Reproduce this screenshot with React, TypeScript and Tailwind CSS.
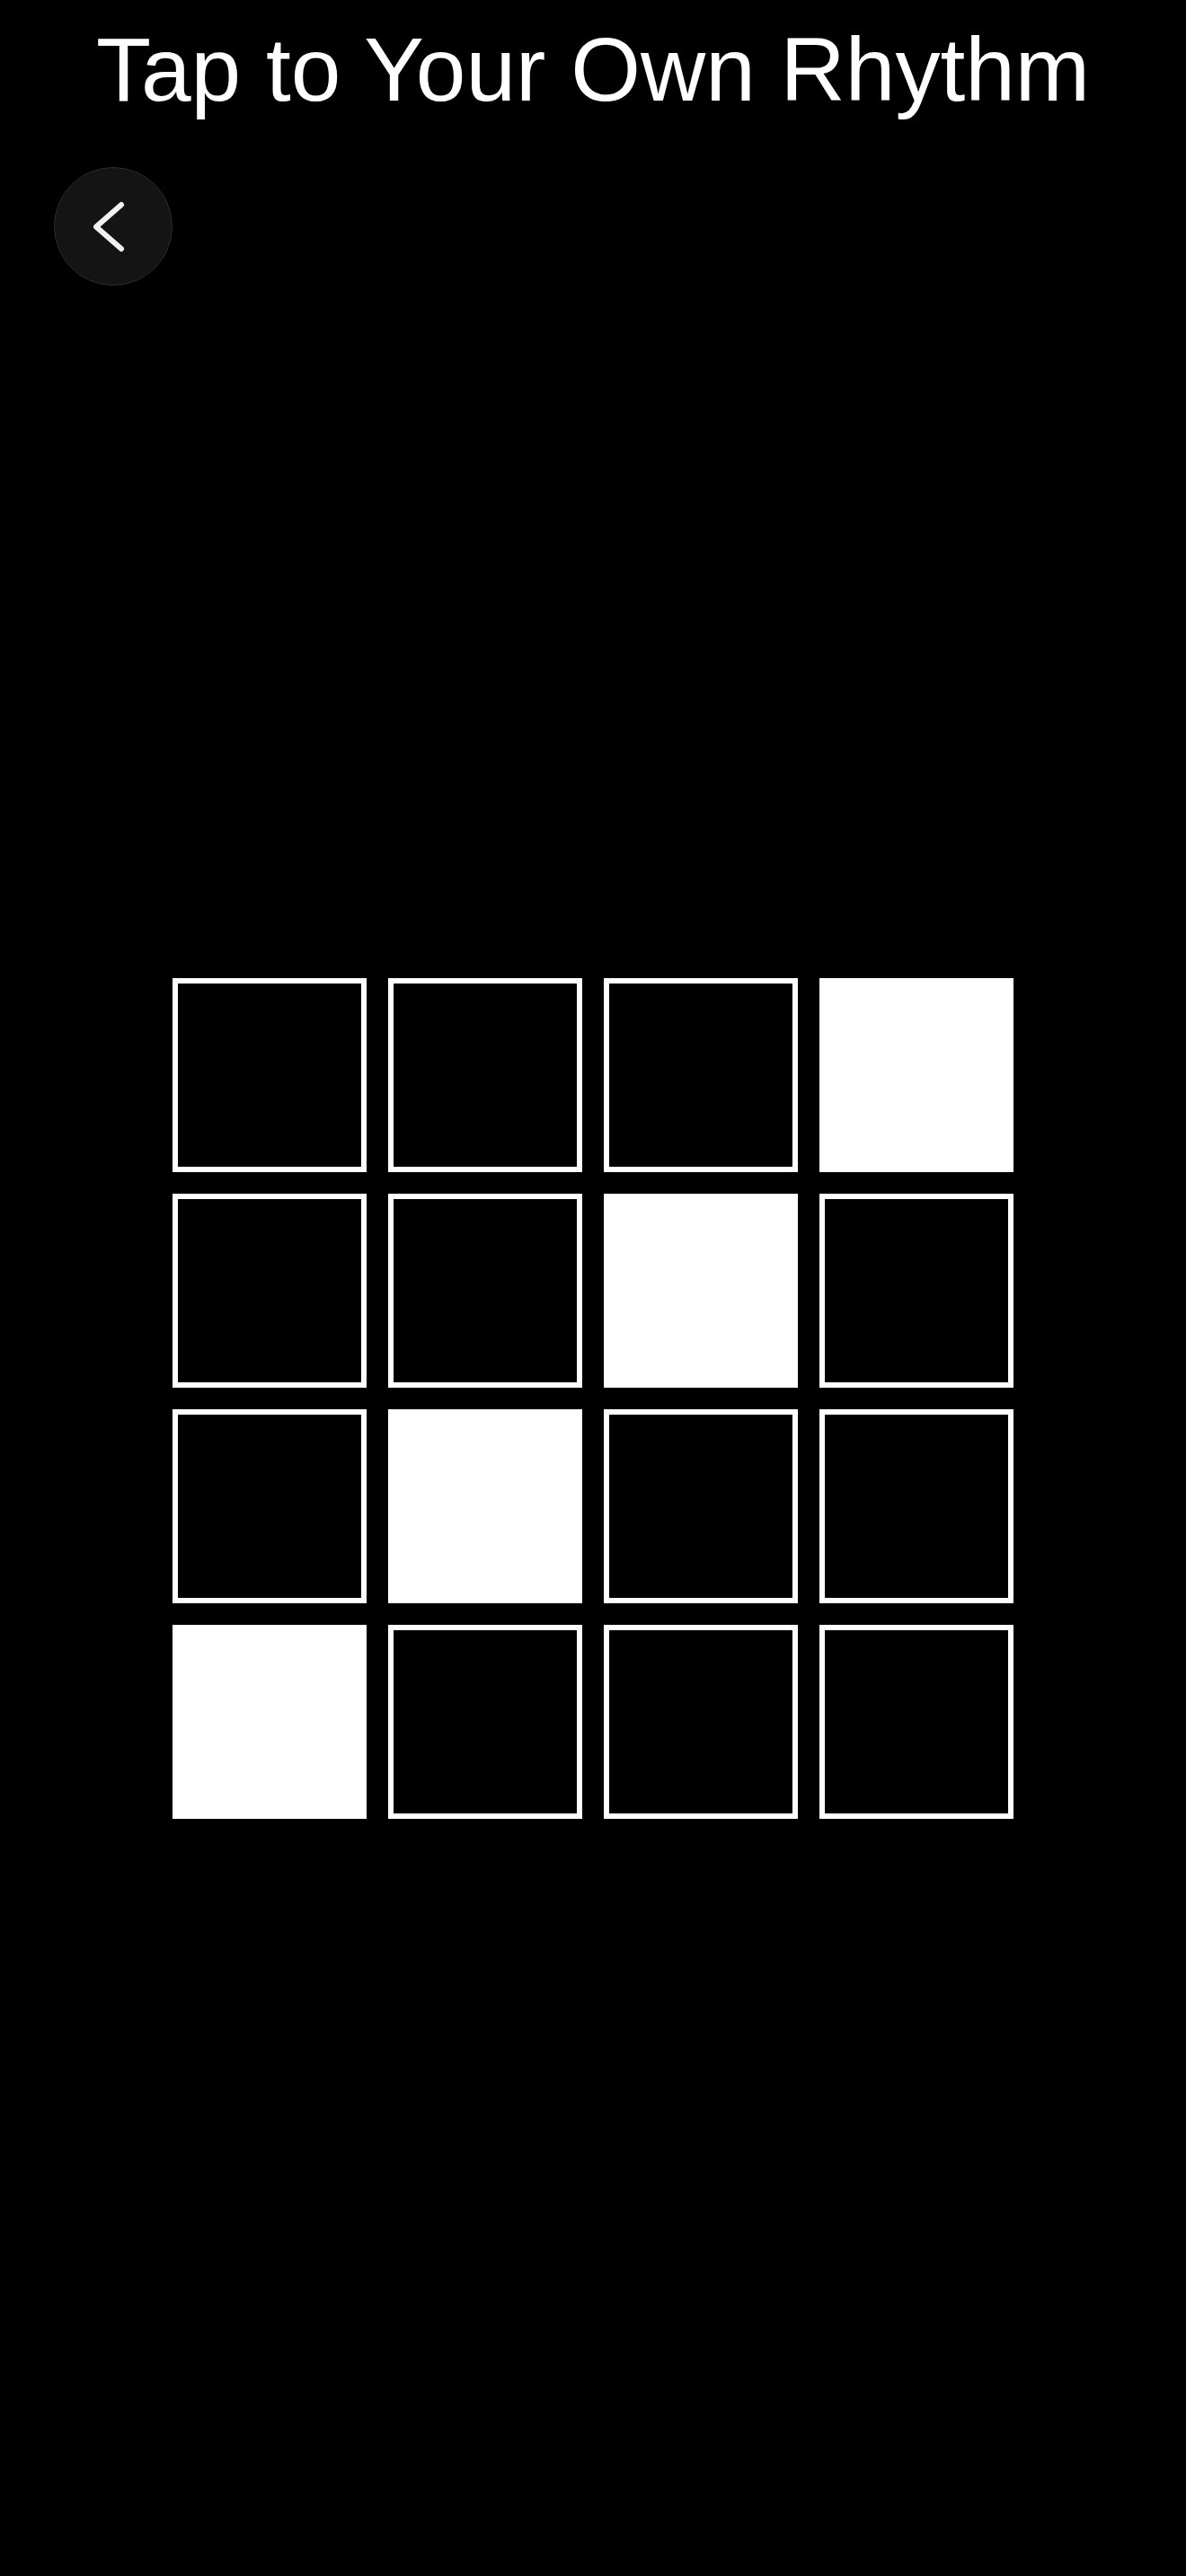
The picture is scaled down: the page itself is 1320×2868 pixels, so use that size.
import React from "react";

// Step pattern: one lit pad per row, walking from right to left.
const pattern: boolean[][] = [
  [false, false, false, true],
  [false, false, true, false],
  [false, true, false, false],
  [true, false, false, false],
];

function Pad({ on }: { on: boolean }) {
  return (
    <button
      type="button"
      className={
        on
          ? "w-[216px] h-[216px] bg-white border-[6px] border-white"
          : "w-[216px] h-[216px] bg-black border-[6px] border-white"
      }
    />
  );
}

export default function App() {
  return (
    <div
      className="min-h-[2868px] w-full bg-black text-white flex flex-col"
      style={{ fontFamily: '"Liberation Sans", Arial, sans-serif' }}
    >
      <h1 className="pt-[21px] text-center text-[100px] leading-[112px] font-normal">
        Tap to Your Own Rhythm
      </h1>

      <button
        type="button"
        aria-label="Back"
        className="ml-[60px] mt-[53px] w-[132px] h-[132px] rounded-full bg-[#141414] border border-[#2c2c2c] flex items-center justify-center"
      >
        <svg width="130" height="130" viewBox="0 0 130 130" fill="none">
          <path
            d="M74 41 L46 65.5 L74 90"
            stroke="#f2f2f2"
            strokeWidth="6"
            strokeLinecap="round"
            strokeLinejoin="round"
          />
        </svg>
      </button>

      <div className="mt-[771px] mx-auto grid grid-cols-4 gap-[24px]">
        {pattern.map((row, r) =>
          row.map((on, c) => <Pad key={`${r}-${c}`} on={on} />)
        )}
      </div>
    </div>
  );
}
